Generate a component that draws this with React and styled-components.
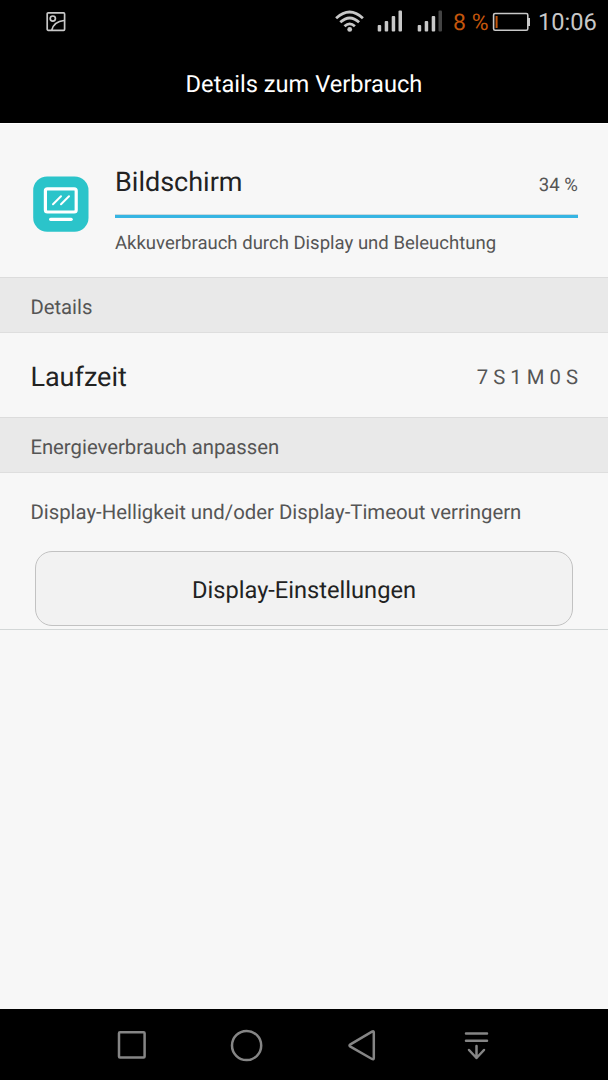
import React from "react";
import styled, { createGlobalStyle } from "styled-components";

const GlobalStyle = createGlobalStyle`
  * { box-sizing: border-box; }
  body {
    margin: 0;
    background: #f7f7f7;
    font-family: Roboto, "Liberation Sans", sans-serif;
    text-rendering: geometricPrecision;
  }
`;

const Screen = styled.div`
  display: flex;
  flex-direction: column;
  height: 1080px;
  background: #f7f7f7;
  overflow: hidden;
`;

const StatusBar = styled.header`
  display: flex;
  align-items: center;
  height: 43px;
  padding: 0 11px 0 46px;
  background: #000;
  color: #c8c8c8;
  font-size: 23.65px;
  line-height: 43px;
  white-space: nowrap;
  svg { display: block; flex: none; }
`;

const StatusIcons = styled.div`
  display: flex;
  align-items: center;
  margin-left: auto;
`;

const BatteryLevel = styled.span`
  width: 39px;
  padding-top: 2px;
  color: #c4560c;
  font-size: 23px;
`;

const Clock = styled.time`
  width: 59px;
  margin-left: 8px;
  padding-top: 1px;
`;

const TitleBar = styled.h1`
  height: 80px;
  margin: 0;
  background: #000;
  color: #fff;
  font-size: 23.65px;
  font-weight: 400;
  line-height: 83px;
  text-align: center;
`;

const Content = styled.main`
  flex: 1;
`;

const Summary = styled.section`
  display: flex;
  height: 154px;
  padding: 42px 30px 0 33px;
  border-top: 1px solid #fff;
`;

const AppIcon = styled.svg`
  display: block;
  flex: none;
  margin: 10px 26px 0 0;
`;

const SummaryBody = styled.div`
  flex: 1;
`;

const SummaryHead = styled.div`
  display: flex;
  justify-content: space-between;
  height: 48px;
  line-height: 32px;
`;

const Label = styled.span`
  color: #222;
  font-size: 27px;
`;

const Value = styled.span`
  padding-top: ${({ $offset }) => $offset || 0}px;
  color: #555;
  font-size: ${({ $size }) => $size}px;
`;

const Meter = styled.div`
  height: 4px;
  border-top: 1px solid #c9d9de;
  background: #36b5e3;
`;

const Caption = styled.p`
  margin: 13px 0 0;
  color: #555;
  font-size: 18.55px;
  line-height: 24px;
`;

const SectionHeader = styled.h2`
  height: 56px;
  margin: 0;
  padding-left: 30.4px;
  border-top: 1px solid #dcdcdc;
  border-bottom: 1px solid #dedede;
  background: #e9e9e9;
  color: #555;
  font-size: 20.3px;
  font-weight: 400;
  line-height: 58px;
`;

const DetailRow = styled.div`
  display: flex;
  align-items: center;
  justify-content: space-between;
  height: 84px;
  padding: 3px 30px 0 30.4px;
`;

const Advice = styled.section`
  height: 157px;
  padding-top: 25px;
  border-bottom: 1px solid #d3d7d7;
`;

const AdviceText = styled.p`
  margin: 0 30px 25px 30.4px;
  color: #555;
  font-size: 20.35px;
  line-height: 28px;
  white-space: nowrap;
`;

const SettingsButton = styled.button`
  display: block;
  width: 538px;
  height: 75px;
  margin: 0 auto;
  padding: 2px 0 0;
  border: 1px solid #c2c2c2;
  border-radius: 17px;
  background: #f2f2f2;
  color: #222;
  font: 400 23.65px Roboto, "Liberation Sans", sans-serif;
  text-rendering: inherit;
`;

const NavBar = styled.nav`
  display: flex;
  align-items: center;
  justify-content: center;
  gap: 75px;
  height: 71px;
  background: #000;
`;

const NavIcon = styled.svg`
  display: block;
  width: 40px;
  height: 40px;
  fill: none;
  stroke: #858585;
  stroke-width: 2.5;
  stroke-linecap: round;
  stroke-linejoin: round;
`;

const Signal = ({ dimLast, ...rest }) => (
  <svg width="26" height="24" viewBox="0 0 26 24" fill="#c8c8c8" {...rest}>
    <rect x="0.7" y="15" width="3.5" height="6.6" rx="1" />
    <rect x="7.7" y="11" width="3.5" height="10.6" rx="1" />
    <rect x="14.7" y="6" width="3.5" height="15.6" rx="1" />
    <rect x="21.5" y="0.6" width="3.5" height="21" rx="1" fill={dimLast ? "#444" : "#c8c8c8"} />
  </svg>
);

export default function App() {
  return (
    <>
      <GlobalStyle />
      <Screen>
        <StatusBar>
          <svg width="20" height="20" viewBox="0 0 20 20" fill="none" stroke="#c8c8c8" strokeWidth="1.7">
            <rect x="1.2" y="0.9" width="17.4" height="17.4" rx="1" />
            <circle cx="6.8" cy="6.6" r="2.6" />
            <path d="M5.8 18C7.2 12.6 11.6 9.1 18 8.5" />
          </svg>
          <StatusIcons>
            <svg width="30" height="24" viewBox="-0.7 0 30 24" fill="none" stroke="#c8c8c8" strokeWidth="2.8">
              <path d="M1.4 8.2Q15 -4.1 28.2 8.2" />
              <path d="M5.6 12.3Q15 3.7 24.4 12.3" />
              <path d="M9.8 16.2Q15 11.5 20.2 16.2" />
              <circle cx="15" cy="19.4" r="2.4" fill="#c8c8c8" stroke="none" />
            </svg>
            <Signal style={{ marginLeft: 13 }} />
            <Signal dimLast style={{ marginLeft: 14, marginRight: 10 }} />
            <BatteryLevel>8 %</BatteryLevel>
            <svg width="38" height="20" viewBox="0 0 38 20" fill="none">
              <rect x="1.6" y="1.5" width="34.2" height="16.8" rx="1.5" stroke="#c8c8c8" strokeWidth="1.6" />
              <path d="M36 6h2v8h-2z" fill="#c8c8c8" />
              <path d="M3.6 4h2v12h-2z" fill="#c4560c" />
            </svg>
            <Clock>10:06</Clock>
          </StatusIcons>
        </StatusBar>
        <TitleBar>Details zum Verbrauch</TitleBar>
        <Content>
          <Summary>
            <AppIcon width="56" height="56" viewBox="0 0 56 56" fill="none" stroke="#fff" strokeLinecap="round">
              <rect x="0.2" y="0.5" width="55.3" height="55.3" rx="14" fill="#2bc4ca" stroke="none" />
              <rect x="12.4" y="12.8" width="30.8" height="23.2" rx="2" strokeWidth="3.2" />
              <path d="M17.6 43.3h20.6" strokeWidth="3.2" />
              <path d="M20 28.2l8-8M28 28.2l8-8" strokeWidth="2" />
            </AppIcon>
            <SummaryBody>
              <SummaryHead>
                <Label>Bildschirm</Label>
                <Value $size={18.6} $offset={3}>34 %</Value>
              </SummaryHead>
              <Meter />
              <Caption>Akkuverbrauch durch Display und Beleuchtung</Caption>
            </SummaryBody>
          </Summary>
          <SectionHeader>Details</SectionHeader>
          <DetailRow>
            <Label>Laufzeit</Label>
            <Value $size={20.3}>7 S 1 M 0 S</Value>
          </DetailRow>
          <SectionHeader>Energieverbrauch anpassen</SectionHeader>
          <Advice>
            <AdviceText>Display-Helligkeit und/oder Display-Timeout verringern</AdviceText>
            <SettingsButton>Display-Einstellungen</SettingsButton>
          </Advice>
        </Content>
        <NavBar>
          <NavIcon viewBox="0 0 40 40"><rect x="7" y="7.2" width="25.6" height="25.4" rx="1" /></NavIcon>
          <NavIcon viewBox="0 0 40 40"><circle cx="19.6" cy="20.5" r="14.6" /></NavIcon>
          <NavIcon viewBox="0 0 40 40"><path d="M31.8 7.5V33Q31.8 35 30 34L8 21.3Q7 20.5 8 19.7L30 6.7Q31.8 5.7 31.8 7.5Z" /></NavIcon>
          <NavIcon viewBox="0 0 40 40"><path d="M9 8.5h21M9 15.8h21M19.5 21v12M12 25l7.5 8 7.5-8" /></NavIcon>
        </NavBar>
      </Screen>
    </>
  );
}
